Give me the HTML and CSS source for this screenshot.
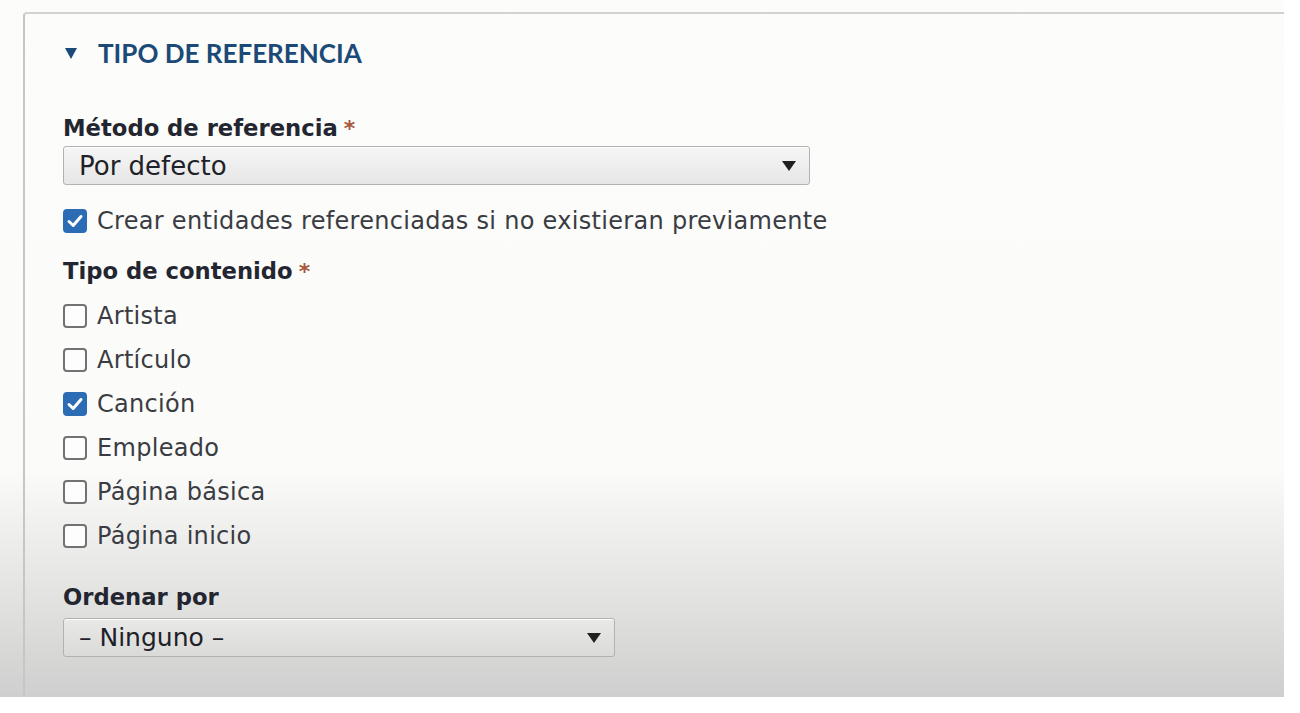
FILE: index.html
```html
<!DOCTYPE html>
<html lang="es">
<head>
<meta charset="utf-8">
<title>Tipo de referencia</title>
<link rel="stylesheet" href="styles.css">
</head>
<body>
<div class="page">
  <div class="panel">
    <div class="summary"><span class="tri"></span><span class="summary-text">TIPO DE REFERENCIA</span></div>

    <div class="field f-method">
      <div class="label">Método de referencia<span class="req">*</span></div>
      <div class="select s-wide"><span class="sel-text">Por defecto</span><span class="arrow"></span></div>
    </div>

    <div class="check-row f-create">
      <span class="cb checked"><svg viewBox="0 0 24 24" width="24" height="24"><path d="M6 12.5 L10.2 16.5 L18 7.5" fill="none" stroke="#fff" stroke-width="3" stroke-linecap="round" stroke-linejoin="round"/></svg></span>
      <span class="opt">Crear entidades referenciadas si no existieran previamente</span>
    </div>

    <div class="field f-type">
      <div class="label">Tipo de contenido<span class="req">*</span></div>
      <div class="options">
        <div class="check-row"><span class="cb"></span><span class="opt">Artista</span></div>
        <div class="check-row"><span class="cb"></span><span class="opt">Artículo</span></div>
        <div class="check-row"><span class="cb checked"><svg viewBox="0 0 24 24" width="24" height="24"><path d="M6 12.5 L10.2 16.5 L18 7.5" fill="none" stroke="#fff" stroke-width="3" stroke-linecap="round" stroke-linejoin="round"/></svg></span><span class="opt">Canción</span></div>
        <div class="check-row"><span class="cb"></span><span class="opt">Empleado</span></div>
        <div class="check-row"><span class="cb"></span><span class="opt">Página básica</span></div>
        <div class="check-row"><span class="cb"></span><span class="opt">Página inicio</span></div>
      </div>
    </div>

    <div class="field f-order">
      <div class="label">Ordenar por</div>
      <div class="select s-narrow"><span class="sel-text sel-small">– Ninguno –</span><span class="arrow"></span></div>
    </div>
  </div>
</div>
</body>
</html>
```
FILE: styles.css
```css
html, body {
  margin: 0;
  padding: 0;
  background: #ffffff;
}

.page {
  width: 1284px;
  height: 697px;
  box-sizing: border-box;
  padding: 12px 0 0 23px;
  background: linear-gradient(to bottom, #fcfcfa 0px, #fbfbf9 470px, #efefee 530px, #e2e2e1 600px, #d6d6d5 660px, #cfcfcf 697px);
}

.panel {
  height: 100%;
  box-sizing: border-box;
  border-top: 2px solid #d2d2d2;
  border-left: 2px solid #c6c6c6;
  border-top-left-radius: 4px;
  padding: 26px 0 0 38px;
  display: flex;
  flex-direction: column;
}

.summary {
  display: flex;
  align-items: center;
  height: 26px;
  gap: 21px;
  color: #1b4a78;
}

.tri {
  width: 0;
  height: 0;
  border-left: 6px solid transparent;
  border-right: 6px solid transparent;
  border-top: 11px solid #1b4a78;
  margin-left: 2px;
}

.summary-text {
  font-family: "Lato", "Open Sans", sans-serif;
  font-weight: 700;
  font-size: 26px;
  line-height: 26px;
}

.label {
  font-family: "DejaVu Sans", "Open Sans", sans-serif;
  font-weight: 700;
  font-size: 22.7px;
  line-height: 26px;
  height: 26px;
  color: #232630;
  white-space: nowrap;
}

.req {
  color: #a8583c;
  margin-left: 6px;
  font-size: 22px;
}

.field {
  display: flex;
  flex-direction: column;
}

.f-method {
  margin-top: 49px;
  gap: 5px;
}

.select {
  height: 39px;
  box-sizing: border-box;
  border: 1.5px solid #b2b2b2;
  border-radius: 3px;
  background: linear-gradient(to bottom, #f6f6f6, #e6e6e6);
  box-shadow: inset 0 1px 0 #ffffff;
  display: flex;
  align-items: center;
  justify-content: space-between;
  padding: 0 13px 0 15px;
}

.s-wide { width: 747px; }
.s-narrow { width: 552px; background: linear-gradient(to bottom, #e9e9e8, #dadad9); }

.sel-text {
  font-family: "DejaVu Sans", "Liberation Sans", sans-serif;
  font-size: 26px;
  line-height: 30px;
  color: #1e2128;
}

.sel-small {
  font-size: 25px;
}

.arrow {
  width: 0;
  height: 0;
  border-left: 7px solid transparent;
  border-right: 7px solid transparent;
  border-top: 10px solid #202020;
}

.check-row {
  display: flex;
  align-items: center;
  height: 26px;
  gap: 10px;
}

.f-create { margin-top: 23px; }

.cb {
  width: 24px;
  height: 24px;
  box-sizing: border-box;
  border: 2px solid #727272;
  border-radius: 4px;
  background: #fdfdfd;
  flex: none;
  display: block;
  position: relative;
}

.cb.checked {
  background: #2c6cb5;
  border-color: #2c6cb5;
}

.cb svg {
  position: absolute;
  left: -2px;
  top: -2px;
}

.opt {
  font-family: "DejaVu Sans", "Liberation Sans", sans-serif;
  font-size: 24px;
  line-height: 26px;
  letter-spacing: 0.3px;
  color: #3a3c43;
  white-space: nowrap;
}

.f-type {
  margin-top: 24px;
}

.options {
  display: flex;
  flex-direction: column;
  gap: 18px;
  margin-top: 19px;
}

.f-order {
  margin-top: 35px;
  gap: 8px;
}
```
